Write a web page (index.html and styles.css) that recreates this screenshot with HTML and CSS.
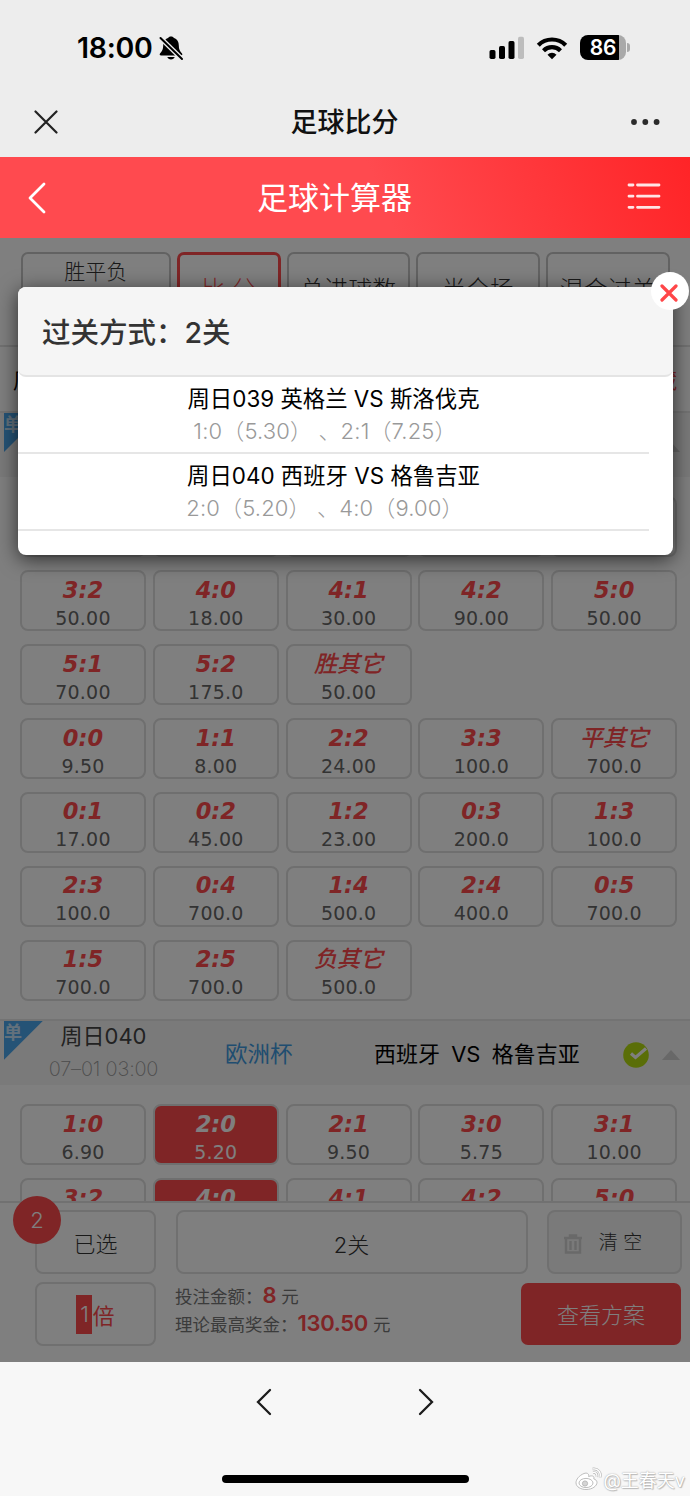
FILE: index.html
```html
<!DOCTYPE html>
<html lang="zh-CN">
<head>
<meta charset="utf-8">
<title>足球比分</title>
<link rel="stylesheet" href="styles.css">
</head>
<body>
<div class="phone">
  <div class="status">
    <span class="clock">18:00</span>
    <svg class="bell" width="26" height="26" viewBox="0 0 26 26"><path d="M13 1.500c-1.500 0-2.500.6-3 1.600C6.500 4.300 5.200 7.300 5.200 10.500c0 4-1 5.500-3.200 8-.8 1 0 2 1 2h20c1 0 1.800-1 1-2-2.200-2.500-3.200-4-3.200-8 0-3.200-1.300-6.200-4.800-7.400-.5-1-1.500-1.600-3-1.600zM9.300 22h7.400c-.5 1.600-1.900 2.500-3.700 2.500s-3.200-.9-3.700-2.500z"/><path d="M2.500 3l21.500 21" stroke="#ededed" stroke-width="4.600"/><path d="M2.500 3l21.500 21" stroke="#000" stroke-width="2" stroke-linecap="round"/></svg>
    <svg class="signal" width="36" height="24" viewBox="0 0 36 24"><rect x=".5" y="14" width="6" height="9" rx="1.700"/><rect x="10" y="10" width="6" height="13" rx="1.700"/><rect x="19.500" y="5" width="6" height="18" rx="1.700"/><rect x="29" y=".7" width="6" height="22.300" rx="1.700" fill="#bdbdbd"/></svg>
    <svg class="wifi" width="32" height="24" viewBox="0 0 32 24" fill="none" stroke="#000" stroke-width="4.200"><path d="M2.300 9.200a19.300 19.300 0 0 1 27.400 0"/><path d="M7.500 14.700a12 12 0 0 1 17 0"/><path d="M16 23.300l-4.500-4.600a6.400 6.400 0 0 1 9 0z" fill="#000" stroke="none"/></svg>
    <div class="battery"><span>86</span></div>
  </div>
  <div class="navbar">
    <svg width="24" height="24" viewBox="0 0 24 24" fill="none" stroke="#222" stroke-width="2.200" stroke-linecap="round"><path d="M1.500 1.500l21 21M22.500 1.500l-21 21"/></svg>
    <h1>足球比分</h1>
    <svg width="29" height="8" viewBox="0 0 29 8" fill="#2b2b2b"><circle cx="3" cy="4" r="2.900"/><circle cx="14.300" cy="4" r="2.900"/><circle cx="25.600" cy="4" r="2.900"/></svg>
  </div>
  <header class="appbar">
    <svg width="18" height="32" viewBox="0 0 18 32" fill="none" stroke="#fff" stroke-width="2.800" stroke-linecap="round" stroke-linejoin="round"><path d="M16 2L2 16l14 14"/></svg>
    <h2>足球计算器</h2>
    <svg class="list" width="34" height="28" viewBox="0 0 34 28" stroke="#fff" stroke-opacity=".88" stroke-width="2.800" stroke-linecap="round"><path d="M2 3h4M10.500 3h21.500M2 14.200h4M10.500 14.200h21.500M2 25.300h4M10.500 25.300h21.500"/></svg>
  </header>

  <main class="main">
    <div class="content">
      <nav class="tabs">
        <div class="tab tab-a">胜平负</div><div class="tab tab-b on">比 分</div><div class="tab">总进球数</div><div class="tab">半全场</div><div class="tab">混合过关</div>
      </nav>
      <div class="filter"><span>周日</span><span class="hide">隐藏</span></div>
      <section class="match">
        <div class="ribbon"><i>单</i></div>
        <div class="arrow"></div>
      </section>
      <div class="grid">
        <div class="tile on"></div><div class="tile"></div><div class="tile on"></div><div class="tile"></div><div class="tile"></div>
        <div class="tile"><b>3:2</b><span>50.00</span></div><div class="tile"><b>4:0</b><span>18.00</span></div><div class="tile"><b>4:1</b><span>30.00</span></div><div class="tile"><b>4:2</b><span>90.00</span></div><div class="tile"><b>5:0</b><span>50.00</span></div>
        <div class="tile"><b>5:1</b><span>70.00</span></div><div class="tile"><b>5:2</b><span>175.0</span></div><div class="tile"><b class="cn">胜其它</b><span>50.00</span></div>
        <div class="tile start"><b>0:0</b><span>9.50</span></div><div class="tile"><b>1:1</b><span>8.00</span></div><div class="tile"><b>2:2</b><span>24.00</span></div><div class="tile"><b>3:3</b><span>100.0</span></div><div class="tile"><b class="cn">平其它</b><span>700.0</span></div>
        <div class="tile"><b>0:1</b><span>17.00</span></div><div class="tile"><b>0:2</b><span>45.00</span></div><div class="tile"><b>1:2</b><span>23.00</span></div><div class="tile"><b>0:3</b><span>200.0</span></div><div class="tile"><b>1:3</b><span>100.0</span></div>
        <div class="tile"><b>2:3</b><span>100.0</span></div><div class="tile"><b>0:4</b><span>700.0</span></div><div class="tile"><b>1:4</b><span>500.0</span></div><div class="tile"><b>2:4</b><span>400.0</span></div><div class="tile"><b>0:5</b><span>700.0</span></div>
        <div class="tile"><b>1:5</b><span>700.0</span></div><div class="tile"><b>2:5</b><span>700.0</span></div><div class="tile"><b class="cn">负其它</b><span>500.0</span></div>
      </div>
      <section class="match">
        <div class="ribbon"><i>单</i></div>
        <div class="when"><b>周日040</b><small>07–01 03:00</small></div>
        <div class="league">欧洲杯</div>
        <div class="teams">西班牙 VS 格鲁吉亚</div>
        <svg class="check" width="26" height="26" viewBox="0 0 26 26"><circle cx="13" cy="13" r="12.800" fill="#b4dc10"/><path d="M8 11.500l4.500 4L23 6.500" fill="none" stroke="#fff" stroke-width="3.200"/></svg>
        <div class="arrow"></div>
      </section>
      <div class="grid">
        <div class="tile"><b>1:0</b><span>6.90</span></div><div class="tile on"><b>2:0</b><span>5.20</span></div><div class="tile"><b>2:1</b><span>9.50</span></div><div class="tile"><b>3:0</b><span>5.75</span></div><div class="tile"><b>3:1</b><span>10.00</span></div>
        <div class="tile"><b>3:2</b></div><div class="tile on"><b>4:0</b></div><div class="tile"><b>4:1</b></div><div class="tile"><b>4:2</b></div><div class="tile"><b>5:0</b></div>
      </div>
    </div>

    <div class="betbar">
      <div class="box picked">已选<em class="badge">2</em></div>
      <div class="box">2关</div>
      <div class="box clear"><svg width="18" height="20" viewBox="0 0 18 20" fill="none" stroke="#d2d2d2" stroke-width="2.400"><path d="M0 4h18M6 4V1.500h6V4M2 4v14.500h14V4M6.500 7v9M11.500 7v9"/></svg><span>清 空</span></div>
      <div class="box times"><mark>1</mark>倍</div>
      <div class="sum"><p>投注金额：<strong>8</strong> 元</p><p>理论最高奖金：<strong>130.50</strong> 元</p></div>
      <button class="view">查看方案</button>
    </div>

    <div class="mask"></div>
    <div class="dialog">
      <div class="dialog-head">过关方式：2关</div>
      <div class="pick"><p>周日039 英格兰 VS 斯洛伐克</p><p class="odds">1:0（5.30） 、2:1（7.25）</p></div>
      <div class="pick"><p>周日040 西班牙 VS 格鲁吉亚</p><p class="odds">2:0（5.20） 、4:0（9.00）</p></div>
      <div class="close"><svg width="18" height="18" viewBox="0 0 18 18" stroke="#ff4648" stroke-width="3.200" stroke-linecap="round"><path d="M2 2l14 14M16 2L2 16"/></svg></div>
    </div>
  </main>

  <footer class="browser">
    <div class="arrows">
      <svg width="16" height="28" viewBox="0 0 16 28" fill="none" stroke="#1c1c1c" stroke-width="2.300" stroke-linecap="round"><path d="M14 2L2 14l12 12"/></svg>
      <svg width="16" height="28" viewBox="0 0 16 28" fill="none" stroke="#1c1c1c" stroke-width="2.300" stroke-linecap="round"><path d="M2 2l12 12L2 26"/></svg>
    </div>
    <div class="home"></div>
    <div class="watermark">
      <svg width="27" height="24" viewBox="0 0 27 24" fill="#fff" stroke="#b5b5b5" stroke-width=".9"><path d="M9 6.500C4 8.500 1 12.500 1 15.800 1 20 6 22.500 11 22.500c6.500 0 11-3.600 11-7 0-2-1.500-3-3.200-3.600.8-2.400-1-4-5.200-2.400.5-3-1.600-4-4.600-3z"/><ellipse cx="11" cy="16" rx="7" ry="4.600"/><circle cx="10" cy="16.500" r="2.600" fill="#d4d4d4"/><path d="M18 5.500c3-.3 4.500 1.700 3.800 4.300M17.500 2c5.500-.8 9 3.300 7.500 8.500" fill="none" stroke="#b5b5b5" stroke-width="2.600"/><path d="M18 5.500c3-.3 4.500 1.700 3.800 4.300M17.500 2c5.500-.8 9 3.300 7.500 8.500" fill="none" stroke="#fff" stroke-width="1.300"/></svg>
      <span>@王春天v</span>
    </div>
  </footer>
</div>
</body>
</html>
```
FILE: styles.css
```css
* { box-sizing: border-box; }
body { margin: 0; font-family: Inter, "Noto Sans CJK SC", sans-serif; color: #333; }
h1, h2, p { margin: 0; font-weight: 400; }
b, i, em { font-style: normal; font-weight: 400; }
svg { display: block; flex: none; }
.phone { width: 690px; height: 1496px; display: flex; flex-direction: column; overflow: hidden; background: #ededed; }

.status { height: 86px; padding: 9px 64px 0 77px; display: flex; align-items: center; }
.clock { font-size: 28.500px; font-weight: 600; color: #000; letter-spacing: -.3px; width: 81px; white-space: nowrap; }
.signal { margin-left: auto; }
.wifi { margin: 0 12px 0 11px; }
.battery { position: relative; width: 46px; height: 25px; border-radius: 8px; background: linear-gradient(90deg, #000 39px, #a9a9a9 39px); color: #fff; font-size: 21px; font-weight: 600; line-height: 25px; text-align: center; letter-spacing: -.3px; }
.battery::after { content: ""; position: absolute; left: 47px; top: 8px; width: 3px; height: 9px; border-radius: 0 3px 3px 0; background: #a9a9a9; }

.navbar { height: 71px; padding: 0 30px 0 34px; display: flex; align-items: center; justify-content: space-between; }
.navbar h1 { font-size: 27px; font-weight: 500; color: #111; line-height: 40px; padding-top: 2px; }

.appbar { height: 81px; padding: 0 29px 0 28px; display: flex; align-items: center; justify-content: space-between; background: linear-gradient(68deg, #ff4a4f 55%, #ff2427 100%); color: #fff; }
.appbar h2 { font-size: 31px; line-height: 44px; margin-left: -4px; padding-top: 1px; }
.list { margin-top: -3px; }

.main { position: relative; height: 1124px; display: flex; flex-direction: column; background: #fff; }
.content { height: 963px; overflow: hidden; }
.tabs { height: 109px; padding: 14px 20px 0 21px; display: flex; gap: 6px; border-bottom: 2px solid #e2e2e2; }
.tab { width: 123.700px; height: 70px; border: 2px solid #c4c4c4; border-radius: 7px; text-align: center; font-size: 24px; line-height: 72px; white-space: nowrap; font-weight: 300; }
.tab-a { width: 149.500px; font-size: 21px; line-height: 36px; }
.tab-b { width: 104px; }
.tab.on { border: 3px solid #ff4a4d; color: #ff4a4d; line-height: 69px; }
.filter { height: 64px; padding: 0 13px; display: flex; justify-content: space-between; align-items: center; font-size: 21px; color: #000; }
.hide { color: #ff4a4d; }

.match { height: 66px; display: flex; align-items: center; background: #f4f4f4; border-top: 2px solid #e6e6e6; padding: 0 10px 0 4px; }
.ribbon { align-self: flex-start; width: 39px; height: 39px; background: #4aa6ec; clip-path: polygon(0 0, 100% 0, 0 100%); }
.ribbon i { display: block; font-size: 18px; line-height: 23px; font-weight: 700; color: #c6e2f8; }
.when { width: 121px; text-align: center; white-space: nowrap; }
.when b { display: block; font-size: 22px; line-height: 33px; color: #444; }
.when small { display: block; font-size: 20px; line-height: 33px; font-weight: 200; color: #999; letter-spacing: -.2px; }
.league { margin-left: 61px; padding-bottom: 2px; width: 149px; font-size: 22.500px; color: #3f9ae0; }
.teams { padding-bottom: 2px; width: 249px; font-size: 22px; color: #000; white-space: nowrap; word-spacing: 5px; }
.check { margin-top: 4px; }
.arrow { margin: 4px 0 0 auto; border: 9px solid transparent; border-top: 0; border-bottom: 10px solid #d0d0d0; }

.grid { display: grid; grid-template-columns: repeat(5, 126px); gap: 12.900px 6.800px; padding: 19.400px 0 18px 20px; }
.tile { height: 61px; padding-top: 3.500px; border: 2px solid #dedede; border-radius: 8px; text-align: center; font-family: "DejaVu Sans", "Noto Sans CJK SC", sans-serif; }
.tile b { display: block; font-size: 22.500px; line-height: 28px; font-weight: 700; font-style: italic; color: #ff4a4d; }
.tile b.cn { font-size: 23px; line-height: 25px; padding-bottom: 3px; font-weight: 500; font-family: "Noto Sans CJK SC", sans-serif; }
.tile span { display: block; font-size: 19px; line-height: 28px; letter-spacing: .2px; color: #666; }
.tile.on { background: #ff4a4d; }
.tile.on b, .tile.on span { color: #fff; }
.start { grid-column: 1; }

.betbar { height: 161px; border-top: 2px solid #e2e2e2; padding: 7px 8px 0 35px; display: grid; grid-template-columns: 121px 352px 135px; grid-template-rows: 64px 64px; gap: 8px 19.500px; }
.box { border: 2px solid #e0e0e0; border-radius: 8px; display: flex; align-items: center; justify-content: center; font-size: 22px; font-weight: 300; padding-top: 2px; }
.picked { position: relative; padding: 0 0 1px; }
.badge { position: absolute; left: -24px; top: -16px; width: 48px; height: 48px; border-radius: 50%; background: #ff4a4d; color: #fff; text-align: center; line-height: 48px; font-size: 22px; font-weight: 300; }
.clear { background: #f4f4f4; font-size: 19px; gap: 17px; padding: 0 23px 4px 0; }
.clear svg { margin-top: 8px; }
.times { color: #ff4a4d; font-weight: 400; padding: 0; }
.times mark { width: 16px; height: 39px; line-height: 38px; text-align: center; background: #ff4a4d; color: #fff; font-weight: 300; }
.sum { font-size: 17.500px; font-weight: 300; color: #777; white-space: nowrap; margin-left: -.5px; width: 260px; }
.sum p { line-height: 27px; }
.sum strong { font-size: 22px; font-weight: 600; letter-spacing: -.3px; color: #ff4a4d; }
.view { width: 160px; height: 62px; margin-left: -26px; margin-top: 1px; border: 0; border-radius: 7px; background: #ff4a4d; color: #fff; font: 300 22px/60px "Noto Sans CJK SC", sans-serif; padding: 0 0 3px; }

.mask { position: absolute; inset: 0; background: rgba(0, 0, 0, .5); }
.dialog { position: absolute; left: 18px; top: 49px; width: 655px; height: 268px; border-radius: 8px; background: #fff; box-shadow: 0 4px 20px rgba(0, 0, 0, .65); }
.dialog-head { height: 90px; padding-left: 24px; border-radius: 8px; border-bottom: 2px solid #e4e4e4; background: #f5f5f5; font-size: 28.500px; font-weight: 500; line-height: 91px; }
.pick { width: 631px; height: 77px; padding-top: 5px; border-bottom: 2px solid #e6e6e6; text-align: center; font-size: 22.400px; line-height: 33px; color: #000; white-space: nowrap; }
.pick .odds { font-size: 22px; color: #999; font-weight: 300; letter-spacing: .15px; padding-right: 17px; }
.close { position: absolute; left: 632.500px; top: -15px; width: 38px; height: 38px; border-radius: 50%; background: #fff; display: flex; align-items: center; justify-content: center; padding: 4px 1px 0 0; }

.browser { position: relative; height: 134px; background: #f7f7f7; display: flex; flex-direction: column; align-items: center; padding-top: 26px; }
.arrows { display: flex; gap: 146px; }
.home { margin-top: 59px; width: 247px; height: 8px; border-radius: 4px; background: #000; }
.watermark { position: absolute; right: 5px; bottom: 2px; display: flex; align-items: center; gap: 1px; color: #fff; font-size: 18px; line-height: 26px; text-shadow: 0 0 1px #aaa, 1px 1px 1px #bbb, 0 0 2px #ccc; }
.watermark svg { margin-top: -4px; }
```
